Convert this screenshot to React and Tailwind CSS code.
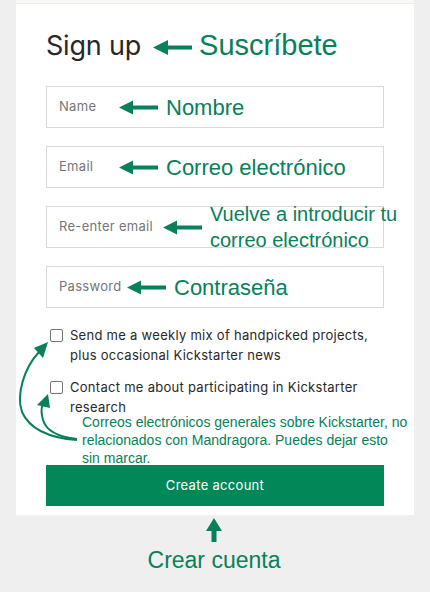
import React from "react";

const G = "#08805a";

function ArrowLeft({ className = "" }) {
  return (
    <svg width="39" height="15" viewBox="0 0 39 15" className={className}>
      <path d="M0 7.5 L14 0.5 L14 5.5 L39 5.5 L39 9.5 L14 9.5 L14 14.5 Z" fill={G} />
    </svg>
  );
}

function Field({ placeholder, arrowLeft, label, labelClass = "" }) {
  return (
    <div className="relative h-[42px] border border-[#d9d9d9] flex items-center px-3">
      <span className="text-[13px] tracking-[0.3px] text-[#757575]">{placeholder}</span>
      <div
        className="absolute top-0 bottom-0 flex items-center gap-[8px]"
        style={{ left: arrowLeft }}
      >
        <ArrowLeft />
        <span
          className={
            "whitespace-nowrap text-[#08805a] font-['Liberation_Sans',Arial,sans-serif] " +
            labelClass
          }
        >
          {label}
        </span>
      </div>
    </div>
  );
}

function Check({ children }) {
  return (
    <label className="flex items-start gap-[7px] text-[13px] tracking-[0.28px] leading-[20px] text-[#282828]">
      <span className="mt-[4px] ml-[4px] h-[13px] w-[13px] shrink-0 rounded-[2px] border border-[#767676] bg-white" />
      <span>{children}</span>
    </label>
  );
}

export default function App() {
  return (
    <div className="relative w-[430px] h-[592px] bg-[#efefef] font-['Inter',sans-serif] overflow-hidden">
      <div className="mx-4 bg-white pb-[9px]">
        <div className="h-[4px] bg-[#f9f9f7] border-b border-[#ebebe8]" />
        <div className="px-[30px]">
          <div className="mt-[24px] flex items-center h-[36px]">
            <h1 className="text-[27px] text-[#282828] tracking-[-0.2px]">Sign up</h1>
            <svg width="39" height="15" viewBox="0 0 39 15" className="ml-[12px] mt-[2px]">
              <path d="M0 7.5 L15 0 L15 5.5 L39 5.5 L39 9.5 L15 9.5 L15 15 Z" fill={G} />
            </svg>
            <span className="ml-[7px] text-[29px] text-[#08805a] font-['Liberation_Sans',Arial,sans-serif]">
              Suscríbete
            </span>
          </div>

          <div className="mt-[22px] flex flex-col gap-[18px]">
            <Field placeholder="Name" arrowLeft="72px" label="Nombre" labelClass="text-[22px]" />
            <Field
              placeholder="Email"
              arrowLeft="72px"
              label="Correo electrónico"
              labelClass="text-[22px]"
            />
            <Field
              placeholder="Re-enter email"
              arrowLeft="116px"
              label={
                <>
                  Vuelve a introducir tu
                  <br />
                  correo electrónico
                </>
              }
              labelClass="text-[20px] leading-[26px]"
            />
            <Field
              placeholder="Password"
              arrowLeft="80px"
              label="Contraseña"
              labelClass="text-[22px]"
            />
          </div>

          <div className="mt-[17px] flex flex-col gap-[12px]">
            <Check>
              Send me a weekly mix of handpicked projects, plus occasional Kickstarter news
            </Check>
            <Check>Contact me about participating in Kickstarter research</Check>
          </div>

          <button className="mt-[48px] w-full h-[41px] bg-[#028858] text-white text-[13px] tracking-[0.3px]">
            Create account
          </button>
        </div>
      </div>

      <div className="mt-[3px] flex flex-col items-center pr-[2px]">
        <svg width="16" height="24" viewBox="0 0 16 24">
          <path d="M8 0 L16 13 L10.5 13 L10.5 24 L5.5 24 L5.5 13 L0 13 Z" fill={G} />
        </svg>
        <div className="mt-[1px] text-[23px] text-[#08805a] font-['Liberation_Sans',Arial,sans-serif]">
          Crear cuenta
        </div>
      </div>

      <div className="absolute left-[82px] top-[413px] text-[14px] leading-[18px] text-[#08805a] font-['Liberation_Sans',Arial,sans-serif] whitespace-nowrap">
        Correos electrónicos generales sobre Kickstarter, no
        <br />
        relacionados con Mandragora. Puedes dejar esto
        <br />
        sin marcar.
      </div>

      <svg
        className="absolute left-0 top-0 pointer-events-none"
        width="430"
        height="592"
        viewBox="0 0 430 592"
      >
        <path
          d="M77 440 C 50 438, 30 430, 22 412 C 16 395, 24 368, 39 352"
          fill="none"
          stroke={G}
          strokeWidth="2"
        />
        <path d="M48 342 L34 348 L43 358 Z" fill={G} />
        <path
          d="M77 439 C 58 437, 46 430, 43 420 C 41 413, 41 408, 43 404"
          fill="none"
          stroke={G}
          strokeWidth="2"
        />
        <path d="M48 394 L37 405 L50 408 Z" fill={G} />
      </svg>
    </div>
  );
}
